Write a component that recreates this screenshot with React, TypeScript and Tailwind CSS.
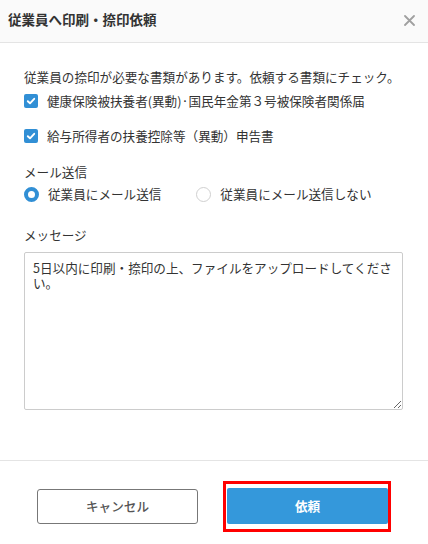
import { useState } from "react"

const font = { fontFamily: '"Noto Sans CJK JP", "Noto Sans", sans-serif' }

function CheckRow({ label, checked, onToggle }: { label: string; checked: boolean; onToggle: () => void }) {
    return (
        <label className="flex items-center h-[18px] cursor-pointer" onClick={onToggle}>
            <span
                className={`w-[14px] h-[14px] rounded-[2px] flex items-center justify-center shrink-0 ${
                    checked ? "bg-[#318fd5]" : "border border-[#ccc] bg-white"
                }`}
            >
                {checked && (
                    <svg width="10" height="10" viewBox="0 0 10 10">
                        <polyline points="1.8,5.2 4,7.3 8.2,2.8" fill="none" stroke="white" strokeWidth="1.9" strokeLinecap="round" strokeLinejoin="round" />
                    </svg>
                )}
            </span>
            <span className="ml-[9px]">{label}</span>
        </label>
    )
}

function Radio({ label, checked, onSelect }: { label: string; checked: boolean; onSelect: () => void }) {
    return (
        <label className="flex items-center h-[18px] cursor-pointer" onClick={onSelect}>
            <span
                className={`w-[15px] h-[15px] rounded-full shrink-0 bg-white ${
                    checked ? "border-[4px] border-[#318fd5]" : "border border-[#d0d0d0]"
                }`}
            />
            <span className="ml-[9px]">{label}</span>
        </label>
    )
}

export default function App() {
    const [docs, setDocs] = useState([true, true])
    const [sendMail, setSendMail] = useState(true)

    return (
        <div className="w-[428px] h-[544px] bg-white text-[#333] overflow-hidden" style={font}>
            {/* Header */}
            <div className="h-[43px] bg-[#fafafa] border-b border-[#e4e4e4] flex items-center justify-between pl-[8px] pr-[13px]">
                <h1 className="text-[13.5px] font-bold leading-none -mt-[2px]">従業員へ印刷・捺印依頼</h1>
                <svg width="11" height="11" viewBox="0 0 11 11" className="-mt-[1px]">
                    <path d="M1 1L10 10M10 1L1 10" stroke="#a0a0a0" strokeWidth="1.8" strokeLinecap="round" />
                </svg>
            </div>

            {/* Body */}
            <div className="px-6 pt-[25px] h-[418px] border-b border-[#e4e4e4] text-[12.6px] leading-[18px]">
                <p>従業員の捺印が必要な書類があります。依頼する書類にチェック。</p>
                <div className="mt-[6px]">
                    <CheckRow
                        label="健康保険被扶養者(異動)·国民年金第３号被保険者関係届"
                        checked={docs[0]}
                        onToggle={() => setDocs([!docs[0], docs[1]])}
                    />
                </div>
                <div className="mt-[17px]">
                    <CheckRow
                        label="給与所得者の扶養控除等（異動）申告書"
                        checked={docs[1]}
                        onToggle={() => setDocs([docs[0], !docs[1]])}
                    />
                </div>

                <p className="mt-[18px]">メール送信</p>
                <div className="mt-[4px] flex gap-[35px]">
                    <Radio label="従業員にメール送信" checked={sendMail} onSelect={() => setSendMail(true)} />
                    <Radio label="従業員にメール送信しない" checked={!sendMail} onSelect={() => setSendMail(false)} />
                </div>

                <p className="mt-[23px]">メッセージ</p>
                <textarea
                    className="mt-[8px] block w-[379px] h-[158px] border border-[#ccc] rounded-[2px] pl-[8px] pr-[4px] pt-[7px] text-[12.6px] leading-[15px] text-[#333] outline-none"
                    style={font}
                    defaultValue="5日以内に印刷・捺印の上、ファイルをアップロードしてください。"
                />
            </div>

            {/* Footer */}
            <div className="flex justify-center items-center gap-[25px] pt-[20px]">
                <button className="w-[161px] h-[35px] border border-[#777] rounded-[3px] text-[12.6px] font-medium text-[#555] bg-white">
                    キャンセル
                </button>
                <div className="border-[3px] border-[#ff0000] pt-[4px] pb-[5px] pl-px">
                    <button className="w-[161px] h-[36px] rounded-[2px] bg-[#3498db] text-white text-[12.6px] font-bold">
                        依頼
                    </button>
                </div>
            </div>
        </div>
    )
}
